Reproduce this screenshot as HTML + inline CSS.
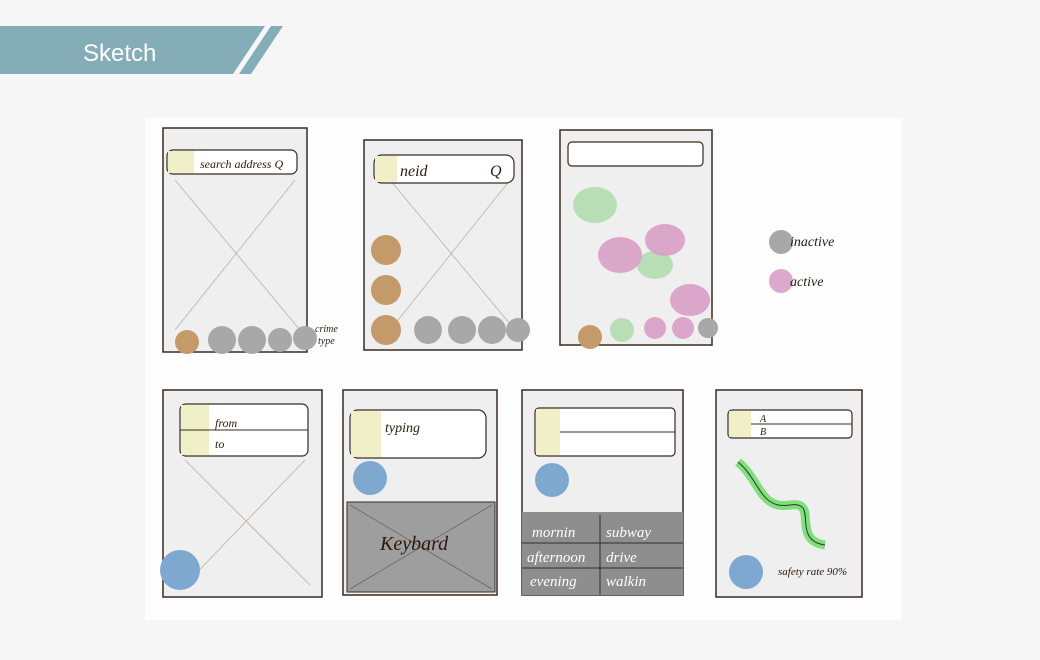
<!DOCTYPE html><html><head><style>body{margin:0;background:#f6f6f6;width:1040px;height:660px;overflow:hidden;font-family:"Liberation Sans",sans-serif}</style></head><body>
<svg width="1040" height="660" xmlns="http://www.w3.org/2000/svg" style="position:absolute;left:0;top:0">
<rect width="1040" height="660" fill="#f6f6f6"/>
<polygon points="0,26 265,26 233,74 0,74" fill="#84adb8"/>
<polygon points="271,26 283,26 251,74 239,74" fill="#84adb8"/>
<text x="83" y="61" font-size="24" fill="#fff" font-family="Liberation Sans">Sketch</text>
<rect x="145" y="118" width="757" height="502" fill="#fdfdfd"/>
<g stroke="#3a2a20" stroke-width="1.5" fill="#efefef">
<rect x="163" y="128" width="144" height="224"/>
<rect x="364" y="140" width="158" height="210"/>
<rect x="560" y="130" width="152" height="215"/>
<rect x="163" y="390" width="159" height="207"/>
<rect x="343" y="390" width="154" height="205"/>
<rect x="522" y="390" width="161" height="205"/>
<rect x="716" y="390" width="146" height="207"/>
</g>
<g stroke="#b8b0a8" stroke-width="0.8">
<line x1="175" y1="180" x2="300" y2="330"/><line x1="295" y1="180" x2="175" y2="330"/>
<line x1="390" y1="180" x2="515" y2="330"/><line x1="510" y1="180" x2="390" y2="330"/>
<line x1="185" y1="460" x2="310" y2="585"/><line x1="305" y1="460" x2="185" y2="585"/>
</g>
<g stroke="#3a2a20" stroke-width="1.2" fill="#fff">
<rect x="167" y="150" width="130" height="24" rx="6"/>
<rect x="374" y="155" width="140" height="28" rx="8"/>
<rect x="568" y="142" width="135" height="24" rx="4"/>
<rect x="180" y="404" width="128" height="52" rx="6"/>
<rect x="350" y="410" width="136" height="48" rx="8"/>
<rect x="535" y="408" width="140" height="48" rx="4"/>
<rect x="728" y="410" width="124" height="28" rx="4"/>
</g>
<g fill="#eff0c8"><rect x="168" y="151" width="26" height="22"/><rect x="375" y="156" width="22" height="26"/><rect x="181" y="405" width="28" height="50"/><rect x="351" y="411" width="30" height="46"/><rect x="536" y="409" width="24" height="46"/><rect x="729" y="411" width="22" height="26"/></g>
<g stroke="#3a2a20" stroke-width="1"><line x1="180" y1="430" x2="308" y2="430"/><line x1="560" y1="432" x2="675" y2="432"/><line x1="751" y1="424" x2="852" y2="424"/></g>
<rect x="347" y="502" width="148" height="90" fill="#9e9e9e" stroke="#3a2a20"/>
<g stroke="#666" stroke-width="0.8"><line x1="350" y1="505" x2="492" y2="589"/><line x1="492" y1="505" x2="350" y2="589"/></g>
<rect x="522" y="512" width="161" height="83" fill="#8e8e8e"/>
<g stroke="#3a2a20" stroke-width="1"><line x1="600" y1="515" x2="600" y2="595"/><line x1="522" y1="543" x2="683" y2="543"/><line x1="522" y1="568" x2="683" y2="568"/></g>
<g fill="#c59a6a"><circle cx="187" cy="342" r="12"/><circle cx="386" cy="250" r="15"/><circle cx="386" cy="290" r="15"/><circle cx="386" cy="330" r="15"/><circle cx="590" cy="337" r="12"/></g>
<g fill="#a8a8a8"><circle cx="222" cy="340" r="14"/><circle cx="252" cy="340" r="14"/><circle cx="280" cy="340" r="12"/><circle cx="305" cy="338" r="12"/><circle cx="428" cy="330" r="14"/><circle cx="462" cy="330" r="14"/><circle cx="492" cy="330" r="14"/><circle cx="518" cy="330" r="12"/><circle cx="708" cy="328" r="10"/><circle cx="781" cy="242" r="12"/></g>
<g fill="#b0dcae" opacity="0.9"><ellipse cx="595" cy="205" rx="22" ry="18"/><ellipse cx="655" cy="265" rx="18" ry="14"/><circle cx="622" cy="330" r="12"/></g>
<g fill="#d8a0c8" opacity="0.9"><ellipse cx="620" cy="255" rx="22" ry="18"/><ellipse cx="665" cy="240" rx="20" ry="16"/><ellipse cx="690" cy="300" rx="20" ry="16"/><circle cx="655" cy="328" r="11"/><circle cx="683" cy="328" r="11"/><circle cx="781" cy="281" r="12"/></g>
<g fill="#7fa8d0"><circle cx="180" cy="570" r="20"/><circle cx="370" cy="478" r="17"/><circle cx="552" cy="480" r="17"/><circle cx="746" cy="572" r="17"/></g>
<path d="M738 462 C760 480 760 510 790 505 C820 500 790 540 825 545" stroke="#7ee07a" stroke-width="9" fill="none"/>
<path d="M738 462 C760 480 760 510 790 505 C820 500 790 540 825 545" stroke="#333" stroke-width="1" fill="none"/>
<g font-family="Liberation Serif" fill="#2a1a10" font-style="italic">
<text x="200" y="168" font-size="12">search address Q</text>
<text x="400" y="176" font-size="16">neid</text><text x="490" y="176" font-size="16">Q</text>
<text x="215" y="427" font-size="12">from</text><text x="215" y="448" font-size="12">to</text>
<text x="385" y="432" font-size="14">typing</text>
<text x="380" y="550" font-size="20">Keybard</text>
<text x="532" y="537" font-size="15" fill="#fff">mornin</text><text x="606" y="537" font-size="15" fill="#fff">subway</text>
<text x="527" y="562" font-size="15" fill="#fff">afternoon</text><text x="606" y="562" font-size="15" fill="#fff">drive</text>
<text x="530" y="586" font-size="15" fill="#fff">evening</text><text x="606" y="586" font-size="15" fill="#fff">walkin</text>
<text x="790" y="246" font-size="14">inactive</text>
<text x="790" y="286" font-size="14">active</text>
<text x="778" y="575" font-size="11">safety rate 90%</text>
<text x="315" y="332" font-size="10">crime</text><text x="318" y="344" font-size="10">type</text>
<text x="760" y="422" font-size="10">A</text><text x="760" y="435" font-size="10">B</text>
</g>
</svg>
</body></html>
